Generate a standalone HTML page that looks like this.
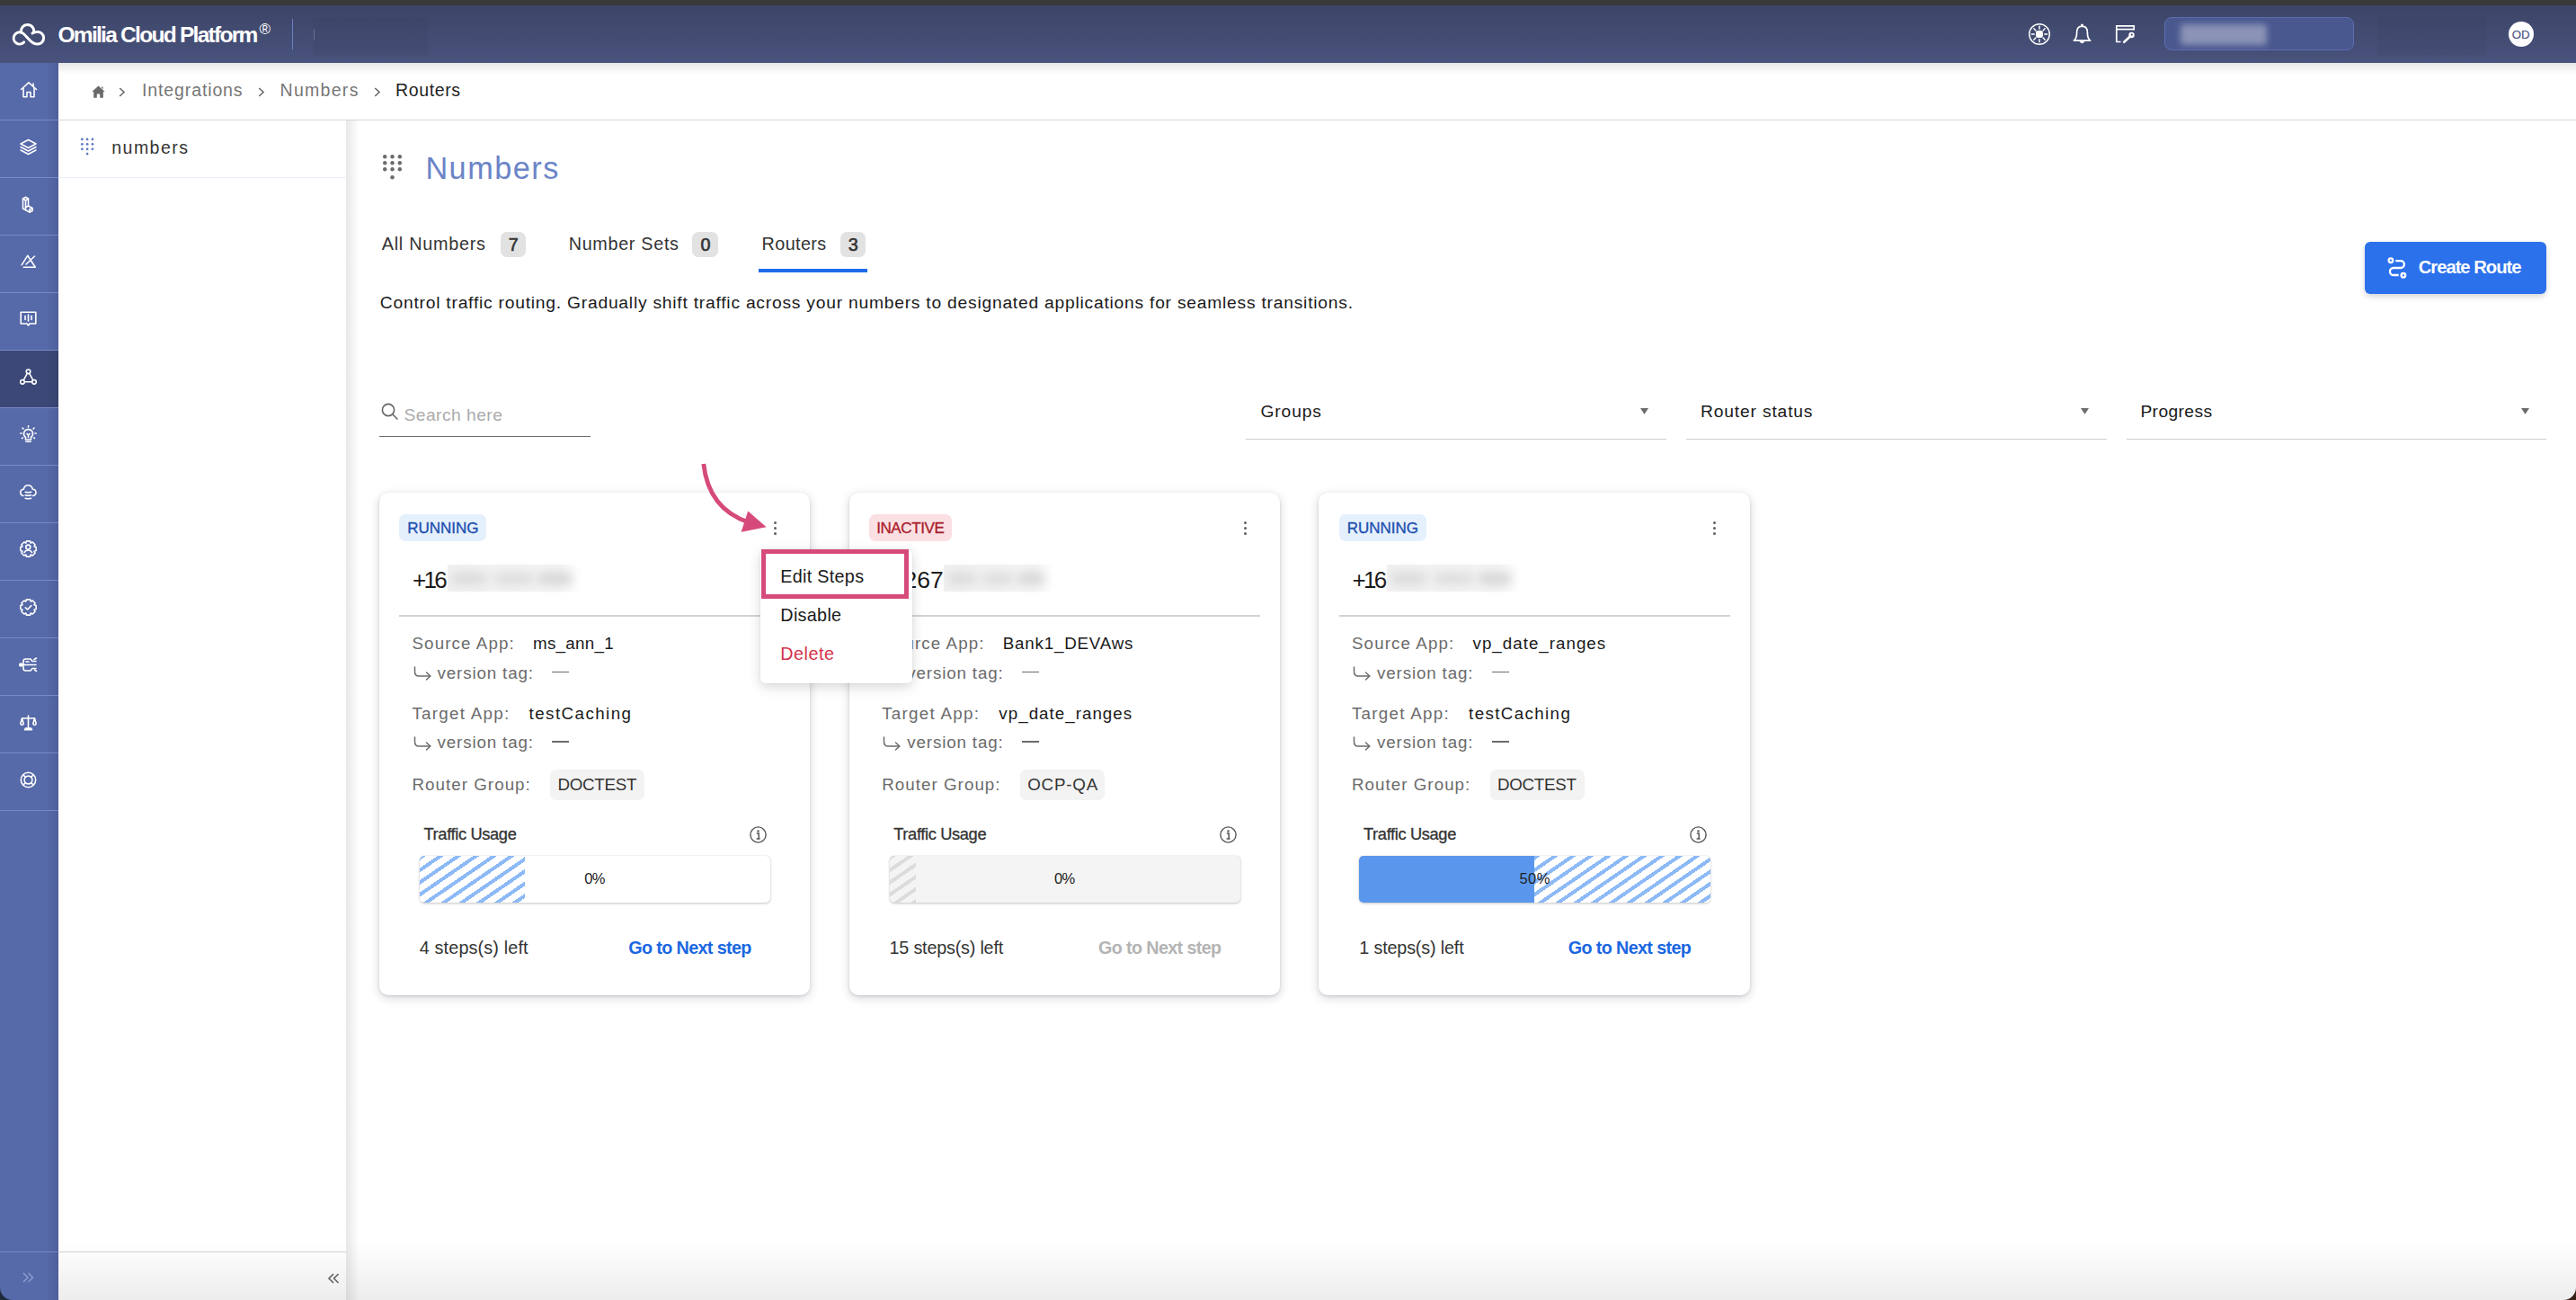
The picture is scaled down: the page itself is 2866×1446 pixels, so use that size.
<!DOCTYPE html><html><head><meta charset="utf-8"><title>Routers</title><style>
*{margin:0;padding:0;box-sizing:border-box}
html,body{width:2866px;height:1446px;overflow:hidden;background:#fff;font-family:'Liberation Sans',sans-serif}
.t{position:absolute;white-space:pre}
.r{position:absolute}
svg{position:absolute;overflow:visible}
</style></head><body>
<div class="r" style="left:0.00px;top:0.00px;width:2866.00px;height:6.00px;background:#3a3a3a"></div>
<div class="r" style="left:0.00px;top:6.00px;width:2866.00px;height:64.00px;background:linear-gradient(180deg,#3d4567 0%,#48527c 100%)"></div>
<div class="r" style="left:65.00px;top:70.00px;width:2801.00px;height:12.00px;background:linear-gradient(180deg,rgba(0,0,0,0.10),rgba(0,0,0,0))"></div>
<svg style="left:8px;top:18px" width="50" height="40" viewBox="0 0 50 40">
<g fill="none" stroke="#fff" stroke-width="3" stroke-linecap="round" stroke-linejoin="round">
<path d="M18.6 28.9 A6.6 6.6 0 1 1 16.3 18.3 C 21.5 20.5, 25.5 31, 33 31 A6.8 6.8 0 1 0 33 17.5 C 30.5 17.5, 29 18.5, 28 19"/>
<path d="M15.5 17.8 A7.2 7.2 0 1 1 29.7 17.8"/>
</g></svg>
<div class="t" style="left:64.50px;top:27.36px;font-size:24.5px;line-height:24.5px;font-weight:700;color:#ffffff;letter-spacing:-1.725px;">Omilia Cloud Platform</div>
<div class="t" style="left:288.50px;top:24.21px;font-size:17px;line-height:17px;font-weight:400;color:#ffffff;">®</div>
<div class="r" style="left:324.50px;top:21.00px;width:1.50px;height:34.00px;background:#6d80c4"></div>
<div class="r" style="left:348.00px;top:19.50px;width:128.00px;height:41.00px;background:rgba(40,45,75,0.08)"></div>
<div class="r" style="left:348.50px;top:32.00px;width:1.00px;height:11.50px;background:rgba(140,150,190,0.5)"></div>
<svg style="left:2257px;top:26px" width="24" height="24" viewBox="0 0 23.2 23.2">
<g fill="none" stroke="#fff" stroke-width="1.4" stroke-linecap="round"><circle cx="11.6" cy="11.6" r="10.9"/><line x1="17.20" y1="11.60" x2="20.00" y2="11.60"/><line x1="15.56" y1="15.56" x2="17.54" y2="17.54"/><line x1="11.60" y1="17.20" x2="11.60" y2="20.00"/><line x1="7.64" y1="15.56" x2="5.66" y2="17.54"/><line x1="6.00" y1="11.60" x2="3.20" y2="11.60"/><line x1="7.64" y1="7.64" x2="5.66" y2="5.66"/><line x1="11.60" y1="6.00" x2="11.60" y2="3.20"/><line x1="15.56" y1="7.64" x2="17.54" y2="5.66"/></g>
<rect x="7.8" y="7.8" width="7.6" height="7.6" rx="2.2" fill="#fff"/></svg>
<svg style="left:2306px;top:26px" width="21" height="24" viewBox="0 0 21 24">
<g fill="none" stroke="#fff" stroke-width="1.7" stroke-linejoin="round">
<path d="M10.5 3.2 C6.2 3.2 4.6 6.5 4.6 10.5 C4.6 15 3.9 17.2 1.4 19.2 L19.6 19.2 C17.1 17.2 16.4 15 16.4 10.5 C16.4 6.5 14.8 3.2 10.5 3.2 Z"/></g>
<circle cx="10.5" cy="2" r="1.6" fill="#fff"/><path d="M7.6 20 Q10.5 24.5 13.4 20 Z" fill="#fff"/></svg>
<svg style="left:2353px;top:27px" width="24" height="22" viewBox="0 0 24 22">
<g fill="none" stroke="#fff" stroke-width="1.7">
<path d="M6.5 19.5 L1.8 19.5 L1.8 1.8 L21.2 1.8 L21.2 6.5"/><path d="M1.8 5.6 L21.2 5.6"/></g>
<circle cx="18.5" cy="12" r="3.2" fill="#fff"/><circle cx="18.8" cy="11.6" r="1.1" fill="#465080"/>
<path d="M16.4 14 L10.2 19.8" stroke="#fff" stroke-width="2.6" stroke-linecap="round"/></svg>
<div class="r" style="left:2408.00px;top:19.00px;width:211.00px;height:37.00px;background:#4a5890;border:1px solid #5b6db2;border-radius:8px"></div>
<div class="r" style="left:2426.00px;top:27.00px;width:96.00px;height:23.00px;background:#8b94b6;filter:blur(3.5px);border-radius:4px"></div>
<div class="r" style="left:2645.00px;top:18.00px;width:121.00px;height:43.00px;background:rgba(40,45,75,0.08)"></div>
<div class="r" style="left:2791.00px;top:24.00px;width:28.00px;height:28.00px;background:#fff;border-radius:50%"></div>
<div class="t" style="left:2794.70px;top:31.68px;font-size:13.25px;line-height:13.25px;font-weight:400;color:#4a5482;-webkit-text-stroke:0.15px #4a5482;">OD</div>
<div class="r" style="left:0.00px;top:70.00px;width:65.00px;height:1376.00px;background:linear-gradient(90deg,#5669a8 0%,#5669a8 80%,#4e5f9c 100%)"></div>
<div class="r" style="left:0.00px;top:389.50px;width:65.00px;height:63.00px;background:linear-gradient(90deg,#3b4878 0%,#3b4878 80%,#36426f 100%)"></div>
<div class="r" style="left:0.00px;top:133.00px;width:65.00px;height:1.00px;background:rgba(150,165,220,0.55)"></div>
<div class="r" style="left:0.00px;top:197.00px;width:65.00px;height:1.00px;background:rgba(150,165,220,0.55)"></div>
<div class="r" style="left:0.00px;top:261.00px;width:65.00px;height:1.00px;background:rgba(150,165,220,0.55)"></div>
<div class="r" style="left:0.00px;top:325.00px;width:65.00px;height:1.00px;background:rgba(150,165,220,0.55)"></div>
<div class="r" style="left:0.00px;top:389.00px;width:65.00px;height:1.00px;background:rgba(150,165,220,0.55)"></div>
<div class="r" style="left:0.00px;top:453.00px;width:65.00px;height:1.00px;background:rgba(150,165,220,0.55)"></div>
<div class="r" style="left:0.00px;top:517.00px;width:65.00px;height:1.00px;background:rgba(150,165,220,0.55)"></div>
<div class="r" style="left:0.00px;top:581.00px;width:65.00px;height:1.00px;background:rgba(150,165,220,0.55)"></div>
<div class="r" style="left:0.00px;top:645.00px;width:65.00px;height:1.00px;background:rgba(150,165,220,0.55)"></div>
<div class="r" style="left:0.00px;top:709.00px;width:65.00px;height:1.00px;background:rgba(150,165,220,0.55)"></div>
<div class="r" style="left:0.00px;top:773.00px;width:65.00px;height:1.00px;background:rgba(150,165,220,0.55)"></div>
<div class="r" style="left:0.00px;top:837.00px;width:65.00px;height:1.00px;background:rgba(150,165,220,0.55)"></div>
<div class="r" style="left:0.00px;top:901.00px;width:65.00px;height:1.00px;background:rgba(150,165,220,0.55)"></div>
<div class="r" style="left:0.00px;top:1391.50px;width:65.00px;height:1.00px;background:rgba(150,165,220,0.55)"></div>
<svg style="left:0;top:1432px" width="14" height="14" viewBox="0 0 14 14"><path d="M0 0 A14 14 0 0 0 14 14 L0 14 Z" fill="#1e2a3a"/></svg>
<svg style="left:2852px;top:1432px" width="14" height="14" viewBox="0 0 14 14"><path d="M14 0 A14 14 0 0 1 0 14 L14 14 Z" fill="#3a2418"/></svg>
<svg style="left:25px;top:1415px" width="13" height="12" viewBox="0 0 13 12"><g fill="none" stroke="#8c9ad0" stroke-width="1.5"><path d="M1 1 L6 6 L1 11"/><path d="M6.5 1 L11.5 6 L6.5 11"/></g></svg>
<svg style="left:22px;top:90px" width="20" height="19" viewBox="0 0 20 19"><g fill="none" stroke="#fff" stroke-width="1.6" stroke-linecap="round" stroke-linejoin="round"><path d="M1.5 9.5 L10 1.8 L18.5 9.5"/><path d="M4 7.6 V17.8 H8 V12.5 H12 V17.8 H16 V7.6"/><path d="M15 3 V6"/></g></svg>
<svg style="left:22px;top:154px" width="19" height="19" viewBox="0 0 19 19"><g fill="none" stroke="#fff" stroke-width="1.6" stroke-linecap="round" stroke-linejoin="round"><path d="M9.5 1.5 L18 6 L9.5 10.5 L1 6 Z"/><path d="M1 9.5 L9.5 14 L18 9.5"/><path d="M1 13 L9.5 17.5 L18 13"/></g></svg>
<svg style="left:24px;top:218px" width="15" height="19" viewBox="0 0 15 19"><g fill="none" stroke="#fff" stroke-width="1.6" stroke-linecap="round" stroke-linejoin="round"><path d="M1.5 3 L4.5 1.2 L7.5 3 V11 L12 13.5 V16.5 L9 18 L1.5 14 Z"/><path d="M4.5 5 L7.5 3"/><path d="M1.5 3 L4.5 5 V15.5"/><path d="M7.5 11 L4.5 12.8"/><path d="M9 15 L12 13.5"/><path d="M9 15 V18"/></g></svg>
<svg style="left:23px;top:283px" width="18" height="16" viewBox="0 0 18 16"><g fill="none" stroke="#fff" stroke-width="1.6" stroke-linecap="round" stroke-linejoin="round"><path d="M1.2 11.7 L7.7 1.3 L16.3 14.2 H3.3"/><path d="M6 11 L15.5 2"/></g></svg>
<svg style="left:22px;top:346px" width="19" height="18" viewBox="0 0 19 18"><g fill="none" stroke="#fff" stroke-width="1.6" stroke-linecap="round" stroke-linejoin="round"><path d="M1.2 1.2 H17.8 V14 H11 L9.5 16 L8 14 H1.2 Z"/><path d="M6 5.5 V9.5"/><path d="M9.5 4 V11"/><path d="M13 5.5 V9.5"/></g></svg>
<svg style="left:22px;top:410px" width="19" height="19" viewBox="0 0 19 19"><g fill="none" stroke="#fff" stroke-width="1.6" stroke-linecap="round" stroke-linejoin="round"><circle cx="9.5" cy="3.3" r="2.3"/><circle cx="3" cy="14.8" r="2.3"/><circle cx="16" cy="14.8" r="2.3"/><path d="M8.3 5.3 L4.2 12.8"/><path d="M10.7 5.3 L14.8 12.8"/><path d="M5.3 14.8 H13.7"/></g></svg>
<svg style="left:22px;top:473px" width="19" height="19" viewBox="0 0 19 19"><g fill="none" stroke="#fff" stroke-width="1.6" stroke-linecap="round" stroke-linejoin="round"><path d="M6.5 13.5 C4.5 12 4.3 10 4.6 8.5 C5.2 6 7.2 4.6 9.5 4.6 C11.8 4.6 13.8 6 14.4 8.5 C14.7 10 14.5 12 12.5 13.5 V16 H6.5 Z"/><path d="M6.8 18.2 H12.2"/><path d="M8 9.5 L9.5 11 L11 9.5 M9.5 11 V13.5"/><path d="M9.5 0.8 V2"/><path d="M3 3 L3.9 3.9"/><path d="M16 3 L15.1 3.9"/><path d="M0.8 9 H2"/><path d="M17 9 H18.2"/><path d="M2.5 14.5 L3.3 13.9"/><path d="M16.5 14.5 L15.7 13.9"/></g></svg>
<svg style="left:22px;top:539px" width="19" height="18" viewBox="0 0 19 18"><g fill="none" stroke="#fff" stroke-width="1.6" stroke-linecap="round" stroke-linejoin="round"><path d="M4 12.5 C1.8 12.2 0.8 10.6 0.8 8.8 C0.8 6.8 2.3 5.4 4.2 5.3 C4.8 2.6 6.8 0.8 9.3 0.8 C11.8 0.8 13.8 2.6 14.4 5.3 C16.4 5.4 18 6.8 18 8.8 C18 10.6 16.9 12.2 14.6 12.5"/><path d="M6.2 8.3 Q9.4 9.3 12.6 8.3"/><path d="M6.2 11.8 Q9.4 12.8 12.6 11.8"/><path d="M6.2 15.2 Q9.4 16.2 12.6 15.2"/></g></svg>
<svg style="left:22px;top:601px" width="19" height="19" viewBox="0 0 19 19"><g fill="none" stroke="#fff" stroke-width="1.6" stroke-linecap="round" stroke-linejoin="round"><path d="M7.50 0.83 L11.50 0.83 L12.18 3.03 L14.22 1.95 L17.05 4.78 L15.97 6.82 L18.17 7.50 L18.17 11.50 L15.97 12.18 L17.05 14.22 L14.22 17.05 L12.18 15.97 L11.50 18.17 L7.50 18.17 L6.82 15.97 L4.78 17.05 L1.95 14.22 L3.03 12.18 L0.83 11.50 L0.83 7.50 L3.03 6.82 L1.95 4.78 L4.78 1.95 L6.82 3.03 Z"/><circle cx="9.3" cy="7.6" r="2.5"/><path d="M5 13.6 C6 11.8 7.5 11 9.3 11 C11.1 11 12.6 11.8 13.6 13.6"/></g></svg>
<svg style="left:22px;top:666px" width="19" height="19" viewBox="0 0 19 19"><g fill="none" stroke="#fff" stroke-width="1.6" stroke-linecap="round" stroke-linejoin="round"><path d="M7.50 0.83 L11.50 0.83 L12.18 3.03 L14.22 1.95 L17.05 4.78 L15.97 6.82 L18.17 7.50 L18.17 11.50 L15.97 12.18 L17.05 14.22 L14.22 17.05 L12.18 15.97 L11.50 18.17 L7.50 18.17 L6.82 15.97 L4.78 17.05 L1.95 14.22 L3.03 12.18 L0.83 11.50 L0.83 7.50 L3.03 6.82 L1.95 4.78 L4.78 1.95 L6.82 3.03 Z"/><path d="M6.3 9.8 L8.6 12 L12.8 7.6"/></g></svg>
<svg style="left:21px;top:731px" width="21" height="17" viewBox="0 0 21 17"><g fill="none" stroke="#fff" stroke-width="1.6" stroke-linecap="round" stroke-linejoin="round"><circle cx="2.2" cy="8.5" r="1.4" fill="#fff"/><path d="M3.5 8.5 H19"/><path d="M5 8.5 V4.5 C5 3 6 2 7.5 2 H13 L15 4.5 H19"/><path d="M5 8.5 V12.5 C5 14 6 15 7.5 15 H13 L15 12.5 H19"/><path d="M8 5 H11"/><path d="M17 2.5 L19.5 1"/><path d="M17.5 14 L19.5 15.5"/></g></svg>
<svg style="left:22px;top:795px" width="19" height="18" viewBox="0 0 19 18"><g fill="none" stroke="#fff" stroke-width="1.6" stroke-linecap="round" stroke-linejoin="round"><path d="M9.5 1 V15"/><path d="M2.5 4 H16.5"/><path d="M2.5 4 L0.8 10 C1.5 12 3.5 12 4.2 10 Z"/><path d="M16.5 4 L14.8 10 C15.5 12 17.5 12 18.2 10 Z"/><path d="M5.5 16.8 H13.5 L12.5 15 H6.5 Z" fill="#fff"/></g></svg>
<svg style="left:22px;top:858px" width="19" height="19" viewBox="0 0 19 19"><g fill="none" stroke="#fff" stroke-width="1.6" stroke-linecap="round" stroke-linejoin="round"><circle cx="9.5" cy="9.5" r="8.2"/><circle cx="9.5" cy="9.5" r="4.4"/><path d="M3.7 3.7 L6.4 6.4"/><path d="M15.3 3.7 L12.6 6.4"/><path d="M3.7 15.3 L6.4 12.6"/><path d="M15.3 15.3 L12.6 12.6"/></g></svg>
<div class="r" style="left:65.00px;top:133.00px;width:2801.00px;height:1.00px;background:#d6d6d6"></div>
<svg style="left:101.5px;top:95px" width="15" height="14" viewBox="0 0 15 14"><path d="M7.5 0.5 L0.3 7 L2.2 7 L2.2 13.8 L5.8 13.8 L5.8 9.6 L9.2 9.6 L9.2 13.8 L12.8 13.8 L12.8 7 L14.7 7 Z M11 1.5 L12.5 1.5 L12.5 4.2 L11 2.8 Z" fill="#6a6a6a"/></svg>
<svg style="left:132px;top:97px" width="8" height="11" viewBox="0 0 8 11"><path d="M1.2 1 L6 5.5 L1.2 10" fill="none" stroke="#6a6a6a" stroke-width="1.6"/></svg>
<svg style="left:286.5px;top:97px" width="8" height="11" viewBox="0 0 8 11"><path d="M1.2 1 L6 5.5 L1.2 10" fill="none" stroke="#6a6a6a" stroke-width="1.6"/></svg>
<svg style="left:415.5px;top:97px" width="8" height="11" viewBox="0 0 8 11"><path d="M1.2 1 L6 5.5 L1.2 10" fill="none" stroke="#6a6a6a" stroke-width="1.6"/></svg>
<div class="t" style="left:158.00px;top:91.09px;font-size:19.5px;line-height:19.5px;font-weight:400;color:#767676;letter-spacing:0.882px;">Integrations</div>
<div class="t" style="left:311.50px;top:91.09px;font-size:19.5px;line-height:19.5px;font-weight:400;color:#767676;letter-spacing:1.300px;">Numbers</div>
<div class="t" style="left:440.10px;top:91.09px;font-size:19.5px;line-height:19.5px;font-weight:400;color:#1f1f1f;letter-spacing:0.600px;">Routers</div>
<div class="r" style="left:65.00px;top:1391.50px;width:320.00px;height:1.00px;background:#d4d4d4"></div>
<div class="r" style="left:65.00px;top:197.00px;width:320.00px;height:1.00px;background:#e9eef8"></div>
<svg style="left:89px;top:153px" width="18" height="21" viewBox="0 0 18 21"><g fill="#5b76c6"><circle cx="2.30" cy="1.90" r="1.35"/><circle cx="8.10" cy="1.90" r="1.35"/><circle cx="13.90" cy="1.90" r="1.35"/><circle cx="2.30" cy="7.35" r="1.35"/><circle cx="8.10" cy="7.35" r="1.35"/><circle cx="13.90" cy="7.35" r="1.35"/><circle cx="2.30" cy="12.80" r="1.35"/><circle cx="8.10" cy="12.80" r="1.35"/><circle cx="13.90" cy="12.80" r="1.35"/><circle cx="8.1" cy="18.1" r="1.35"/></g></svg>
<div class="t" style="left:124.20px;top:155.49px;font-size:19.5px;line-height:19.5px;font-weight:400;color:#333333;letter-spacing:1.500px;">numbers</div>
<svg style="left:365px;top:1416px" width="13" height="12" viewBox="0 0 13 12"><g fill="none" stroke="#666" stroke-width="1.6"><path d="M6 1 L1 6 L6 11"/><path d="M11.5 1 L6.5 6 L11.5 11"/></g></svg>
<div class="r" style="left:385.00px;top:134.00px;width:15.00px;height:1312.00px;background:linear-gradient(90deg,rgba(0,0,0,0.09),rgba(0,0,0,0))"></div>
<div class="r" style="left:65.00px;top:1380.00px;width:2801.00px;height:66.00px;background:linear-gradient(180deg,rgba(0,0,0,0),rgba(0,0,0,0.07))"></div>
<svg style="left:425.5px;top:171.5px" width="22" height="28" viewBox="0 0 22 28"><g fill="#6b6b6b"><circle cx="2.20" cy="2.20" r="2.2"/><circle cx="10.50" cy="2.20" r="2.2"/><circle cx="18.80" cy="2.20" r="2.2"/><circle cx="2.20" cy="9.20" r="2.2"/><circle cx="10.50" cy="9.20" r="2.2"/><circle cx="18.80" cy="9.20" r="2.2"/><circle cx="2.20" cy="16.20" r="2.2"/><circle cx="10.50" cy="16.20" r="2.2"/><circle cx="18.80" cy="16.20" r="2.2"/><circle cx="10.5" cy="25.2" r="2.2"/></g></svg>
<div class="t" style="left:473.40px;top:170.21px;font-size:34.25px;line-height:34.25px;font-weight:400;color:#6b84c7;letter-spacing:1.500px;">Numbers</div>
<div class="t" style="left:424.70px;top:261.88px;font-size:19.75px;line-height:19.75px;font-weight:400;color:#333333;letter-spacing:0.770px;">All Numbers</div>
<div class="t" style="left:632.70px;top:261.88px;font-size:19.75px;line-height:19.75px;font-weight:400;color:#333333;letter-spacing:0.700px;">Number Sets</div>
<div class="t" style="left:847.60px;top:261.88px;font-size:19.75px;line-height:19.75px;font-weight:400;color:#333333;letter-spacing:0.400px;">Routers</div>
<div class="r" style="left:557.00px;top:258.00px;width:27.50px;height:28.00px;background:#e2e2e2;border-radius:7px"></div>
<div class="t" style="left:565.75px;top:262.88px;font-size:19.75px;line-height:19.75px;font-weight:400;color:#333333;-webkit-text-stroke:0.6px #333;">7</div>
<div class="r" style="left:770.00px;top:258.00px;width:29.00px;height:28.00px;background:#e2e2e2;border-radius:7px"></div>
<div class="t" style="left:779.50px;top:262.88px;font-size:19.75px;line-height:19.75px;font-weight:400;color:#333333;-webkit-text-stroke:0.6px #333;">0</div>
<div class="r" style="left:935.00px;top:258.00px;width:27.50px;height:28.00px;background:#e2e2e2;border-radius:7px"></div>
<div class="t" style="left:943.75px;top:262.88px;font-size:19.75px;line-height:19.75px;font-weight:400;color:#333333;-webkit-text-stroke:0.6px #333;">3</div>
<div class="r" style="left:844.00px;top:299.20px;width:121.00px;height:3.40px;background:#1f6be9"></div>
<div class="t" style="left:422.80px;top:327.10px;font-size:19.25px;line-height:19.25px;font-weight:400;color:#1a1a1a;letter-spacing:0.768px;">Control traffic routing. Gradually shift traffic across your numbers to designated applications for seamless transitions.</div>
<div class="r" style="left:2631.00px;top:269.00px;width:202.00px;height:58.00px;background:#2c71ec;border-radius:6px;box-shadow:0 3px 6px rgba(0,0,0,0.16)"></div>
<svg style="left:2655px;top:285px" width="24" height="26" viewBox="0 0 24 26"><g fill="none" stroke="#fff" stroke-width="2.3" stroke-linecap="butt">
<circle cx="4.9" cy="4.7" r="2.3"/><circle cx="18.9" cy="21.3" r="2.3"/>
<path d="M10.3 5.2 H16 A3.9 3.9 0 0 1 16 13 H7.95 A4 4 0 0 0 7.95 21 H13.7"/></g></svg>
<div class="t" style="left:2690.70px;top:287.46px;font-size:20.25px;line-height:20.25px;font-weight:700;color:#ffffff;letter-spacing:-1.018px;">Create Route</div>
<svg style="left:424px;top:448px" width="20" height="20" viewBox="0 0 20 20"><g fill="none" stroke="#666" stroke-width="1.6"><circle cx="8" cy="8" r="6.6"/><path d="M12.8 12.8 L18.3 18.5"/></g></svg>
<div class="t" style="left:449.50px;top:452.00px;font-size:19.25px;line-height:19.25px;font-weight:400;color:#ababab;letter-spacing:0.450px;">Search here</div>
<div class="r" style="left:422.00px;top:484.80px;width:235.00px;height:1.40px;background:#6e6e6e"></div>
<div class="t" style="left:1402.50px;top:448.10px;font-size:19.25px;line-height:19.25px;font-weight:400;color:#1a1a1a;letter-spacing:0.860px;">Groups</div>
<div class="r" style="left:1386.00px;top:487.80px;width:467.50px;height:1.20px;background:#cfcfcf"></div>
<svg style="left:1825.3px;top:454px" width="9" height="7" viewBox="0 0 9 7"><path d="M0 0 H9 L4.5 6.8 Z" fill="#6b6b6b"/></svg>
<div class="t" style="left:1892.00px;top:448.10px;font-size:19.25px;line-height:19.25px;font-weight:400;color:#1a1a1a;letter-spacing:0.833px;">Router status</div>
<div class="r" style="left:1876.00px;top:487.80px;width:467.50px;height:1.20px;background:#cfcfcf"></div>
<svg style="left:2315.3px;top:454px" width="9" height="7" viewBox="0 0 9 7"><path d="M0 0 H9 L4.5 6.8 Z" fill="#6b6b6b"/></svg>
<div class="t" style="left:2381.40px;top:448.10px;font-size:19.25px;line-height:19.25px;font-weight:400;color:#1a1a1a;letter-spacing:0.371px;">Progress</div>
<div class="r" style="left:2365.50px;top:487.80px;width:467.50px;height:1.20px;background:#cfcfcf"></div>
<svg style="left:2804.8px;top:454px" width="9" height="7" viewBox="0 0 9 7"><path d="M0 0 H9 L4.5 6.8 Z" fill="#6b6b6b"/></svg>
<div class="r" style="left:421.90px;top:547.60px;width:479.60px;height:559.00px;background:#fff;border-radius:10px;box-shadow:0 1px 3px rgba(30,35,60,0.14),0 3px 11px rgba(30,35,60,0.19)"></div>
<div class="r" style="left:444.00px;top:572.00px;width:97.00px;height:29.80px;background:#e5f0fd;border-radius:7px"></div>
<div class="t" style="left:453.20px;top:578.51px;font-size:17.0px;line-height:17.0px;font-weight:400;color:#1d4fae;-webkit-text-stroke:0.35px #1d4fae;">RUNNING</div>
<div class="r" style="left:860.80px;top:579.90px;width:3.00px;height:3.00px;background:#606060;border-radius:50%"></div>
<div class="r" style="left:860.80px;top:585.80px;width:3.00px;height:3.00px;background:#606060;border-radius:50%"></div>
<div class="r" style="left:860.80px;top:591.70px;width:3.00px;height:3.00px;background:#606060;border-radius:50%"></div>
<div class="t" style="left:459.10px;top:632.39px;font-size:26px;line-height:26px;font-weight:400;color:#1a1a1a;letter-spacing:-2.800px;">+16</div>
<div class="r" style="left:497.50px;top:628.00px;width:148.00px;height:30.00px;background:linear-gradient(90deg,#f1f1f1,#f5f5f5 85%,rgba(255,255,255,0))"></div>
<div class="r" style="left:501.50px;top:637.00px;width:40.40px;height:13.00px;background:#d9d9d9;filter:blur(6px);border-radius:7px"></div>
<div class="r" style="left:549.30px;top:637.00px;width:44.40px;height:13.00px;background:#dcdcdc;filter:blur(6px);border-radius:7px"></div>
<div class="r" style="left:598.14px;top:637.00px;width:38.48px;height:13.00px;background:#d4d4d4;filter:blur(6px);border-radius:7px"></div>
<div class="r" style="left:444.00px;top:683.60px;width:435.00px;height:2.20px;background:#d3d3d3"></div>
<div class="t" style="left:458.50px;top:706.53px;font-size:18.75px;line-height:18.75px;font-weight:400;color:#6b6b6b;letter-spacing:1.100px;">Source App:</div>
<div class="t" style="left:593.00px;top:706.53px;font-size:18.75px;line-height:18.75px;font-weight:400;color:#1a1a1a;letter-spacing:0.286px;">ms_ann_1</div>
<svg style="left:459.5px;top:741.0px" width="21" height="16" viewBox="0 0 21 16"><g fill="none" stroke="#6b6b6b" stroke-width="1.5" stroke-linecap="round" stroke-linejoin="round"><path d="M1.5 1 V6 C1.5 9 3 11 6 11 H18.5"/><path d="M14.5 7 L18.8 11 L14.5 15"/></g></svg>
<div class="t" style="left:486.50px;top:739.73px;font-size:18.75px;line-height:18.75px;font-weight:400;color:#6b6b6b;letter-spacing:0.864px;">version tag:</div>
<div class="r" style="left:614.00px;top:746.80px;width:19.30px;height:1.40px;background:#6b6b6b"></div>
<svg style="left:459.5px;top:818.5px" width="21" height="16" viewBox="0 0 21 16"><g fill="none" stroke="#6b6b6b" stroke-width="1.5" stroke-linecap="round" stroke-linejoin="round"><path d="M1.5 1 V6 C1.5 9 3 11 6 11 H18.5"/><path d="M14.5 7 L18.8 11 L14.5 15"/></g></svg>
<div class="t" style="left:486.50px;top:817.23px;font-size:18.75px;line-height:18.75px;font-weight:400;color:#6b6b6b;letter-spacing:0.864px;">version tag:</div>
<div class="r" style="left:614.00px;top:824.30px;width:19.30px;height:1.40px;background:#6b6b6b"></div>
<div class="t" style="left:458.40px;top:784.83px;font-size:18.75px;line-height:18.75px;font-weight:400;color:#6b6b6b;letter-spacing:1.300px;">Target App:</div>
<div class="t" style="left:588.60px;top:784.83px;font-size:18.75px;line-height:18.75px;font-weight:400;color:#1a1a1a;letter-spacing:1.440px;">testCaching</div>
<div class="t" style="left:458.40px;top:863.73px;font-size:18.75px;line-height:18.75px;font-weight:400;color:#6b6b6b;letter-spacing:1.050px;">Router Group:</div>
<div class="r" style="left:612.00px;top:856.30px;width:105.30px;height:33.30px;background:#f3f3f3;border-radius:7px"></div>
<div class="t" style="left:620.40px;top:863.73px;font-size:18.75px;line-height:18.75px;font-weight:400;color:#333333;letter-spacing:-0.233px;">DOCTEST</div>
<div class="t" style="left:471.50px;top:918.75px;font-size:18.25px;line-height:18.25px;font-weight:400;color:#333333;letter-spacing:-0.350px;-webkit-text-stroke:0.3px #333;">Traffic Usage</div>
<svg style="left:834.0px;top:918.7px" width="19" height="19" viewBox="0 0 19 19"><circle cx="9.5" cy="9.5" r="8.6" fill="none" stroke="#555" stroke-width="1.4"/><circle cx="9.5" cy="5.4" r="1.2" fill="#555"/><path d="M7.8 8 H10.2 V13.8 M7.6 14 H11.6" fill="none" stroke="#555" stroke-width="1.5"/></svg>
<div class="r" style="left:466.80px;top:951.6px;width:390.30px;height:52.0px;background:#fff;border-radius:5px;overflow:hidden;box-shadow:0 1px 3px rgba(0,0,0,0.22),0 0 1px rgba(0,0,0,0.2)"><div class="r" style="left:0;top:0;width:117px;height:100%;background-color:#fff;background-image:repeating-linear-gradient(145.5deg,#8dbaf6 0px,#8dbaf6 4px,rgba(0,0,0,0) 4px,rgba(0,0,0,0) 11.2px)"></div></div>
<div class="t" style="left:650.30px;top:968.93px;font-size:16.5px;line-height:16.5px;font-weight:400;color:#222222;letter-spacing:-0.700px;">0%</div>
<div class="t" style="left:466.80px;top:1045.08px;font-size:19.75px;line-height:19.75px;font-weight:400;color:#333333;letter-spacing:0.157px;">4 steps(s) left</div>
<div class="t" style="left:699.30px;top:1044.88px;font-size:19.75px;line-height:19.75px;font-weight:700;color:#1b67e2;letter-spacing:-0.636px;">Go to Next step</div>
<div class="r" style="left:944.65px;top:547.60px;width:479.60px;height:559.00px;background:#fff;border-radius:10px;box-shadow:0 1px 3px rgba(30,35,60,0.14),0 3px 11px rgba(30,35,60,0.19)"></div>
<div class="r" style="left:966.75px;top:572.00px;width:92.50px;height:29.80px;background:#fbe0e3;border-radius:7px"></div>
<div class="t" style="left:975.15px;top:578.51px;font-size:17.0px;line-height:17.0px;font-weight:400;color:#a91d2c;letter-spacing:-0.386px;-webkit-text-stroke:0.35px #a91d2c;">INACTIVE</div>
<div class="r" style="left:1383.55px;top:579.90px;width:3.00px;height:3.00px;background:#606060;border-radius:50%"></div>
<div class="r" style="left:1383.55px;top:585.80px;width:3.00px;height:3.00px;background:#606060;border-radius:50%"></div>
<div class="r" style="left:1383.55px;top:591.70px;width:3.00px;height:3.00px;background:#606060;border-radius:50%"></div>
<div class="t" style="left:1005.60px;top:631.97px;font-size:26.5px;line-height:26.5px;font-weight:400;color:#1a1a1a;">267</div>
<div class="r" style="left:1049.60px;top:628.00px;width:121.00px;height:30.00px;background:linear-gradient(90deg,#f1f1f1,#f5f5f5 85%,rgba(255,255,255,0))"></div>
<div class="r" style="left:1053.60px;top:637.00px;width:32.30px;height:13.00px;background:#d9d9d9;filter:blur(6px);border-radius:7px"></div>
<div class="r" style="left:1091.95px;top:637.00px;width:36.30px;height:13.00px;background:#dcdcdc;filter:blur(6px);border-radius:7px"></div>
<div class="r" style="left:1131.88px;top:637.00px;width:31.46px;height:13.00px;background:#d4d4d4;filter:blur(6px);border-radius:7px"></div>
<div class="r" style="left:966.75px;top:683.60px;width:435.00px;height:2.20px;background:#d3d3d3"></div>
<div class="t" style="left:981.25px;top:706.53px;font-size:18.75px;line-height:18.75px;font-weight:400;color:#6b6b6b;letter-spacing:1.100px;">Source App:</div>
<div class="t" style="left:1115.75px;top:706.53px;font-size:18.75px;line-height:18.75px;font-weight:400;color:#1a1a1a;letter-spacing:0.800px;">Bank1_DEVAws</div>
<svg style="left:982.2px;top:741.0px" width="21" height="16" viewBox="0 0 21 16"><g fill="none" stroke="#6b6b6b" stroke-width="1.5" stroke-linecap="round" stroke-linejoin="round"><path d="M1.5 1 V6 C1.5 9 3 11 6 11 H18.5"/><path d="M14.5 7 L18.8 11 L14.5 15"/></g></svg>
<div class="t" style="left:1009.25px;top:739.73px;font-size:18.75px;line-height:18.75px;font-weight:400;color:#6b6b6b;letter-spacing:0.864px;">version tag:</div>
<div class="r" style="left:1136.75px;top:746.80px;width:19.30px;height:1.40px;background:#6b6b6b"></div>
<svg style="left:982.2px;top:818.5px" width="21" height="16" viewBox="0 0 21 16"><g fill="none" stroke="#6b6b6b" stroke-width="1.5" stroke-linecap="round" stroke-linejoin="round"><path d="M1.5 1 V6 C1.5 9 3 11 6 11 H18.5"/><path d="M14.5 7 L18.8 11 L14.5 15"/></g></svg>
<div class="t" style="left:1009.25px;top:817.23px;font-size:18.75px;line-height:18.75px;font-weight:400;color:#6b6b6b;letter-spacing:0.864px;">version tag:</div>
<div class="r" style="left:1136.75px;top:824.30px;width:19.30px;height:1.40px;background:#6b6b6b"></div>
<div class="t" style="left:981.15px;top:784.83px;font-size:18.75px;line-height:18.75px;font-weight:400;color:#6b6b6b;letter-spacing:1.300px;">Target App:</div>
<div class="t" style="left:1111.35px;top:784.83px;font-size:18.75px;line-height:18.75px;font-weight:400;color:#1a1a1a;letter-spacing:1.023px;">vp_date_ranges</div>
<div class="t" style="left:981.15px;top:863.73px;font-size:18.75px;line-height:18.75px;font-weight:400;color:#6b6b6b;letter-spacing:1.050px;">Router Group:</div>
<div class="r" style="left:1134.75px;top:856.30px;width:94.10px;height:33.30px;background:#f3f3f3;border-radius:7px"></div>
<div class="t" style="left:1143.15px;top:863.73px;font-size:18.75px;line-height:18.75px;font-weight:400;color:#333333;letter-spacing:0.820px;">OCP-QA</div>
<div class="t" style="left:994.25px;top:918.75px;font-size:18.25px;line-height:18.25px;font-weight:400;color:#333333;letter-spacing:-0.350px;-webkit-text-stroke:0.3px #333;">Traffic Usage</div>
<svg style="left:1356.8px;top:918.7px" width="19" height="19" viewBox="0 0 19 19"><circle cx="9.5" cy="9.5" r="8.6" fill="none" stroke="#555" stroke-width="1.4"/><circle cx="9.5" cy="5.4" r="1.2" fill="#555"/><path d="M7.8 8 H10.2 V13.8 M7.6 14 H11.6" fill="none" stroke="#555" stroke-width="1.5"/></svg>
<div class="r" style="left:989.55px;top:951.6px;width:390.30px;height:52.0px;background:#f4f4f4;border-radius:5px;overflow:hidden;box-shadow:0 1px 3px rgba(0,0,0,0.22),0 0 1px rgba(0,0,0,0.2)"><div class="r" style="left:0;top:0;width:29px;height:100%;background-color:#f4f4f4;background-image:repeating-linear-gradient(145.5deg,#dcdcdc 0px,#dcdcdc 4px,rgba(0,0,0,0) 4px,rgba(0,0,0,0) 11.2px)"></div></div>
<div class="t" style="left:1173.05px;top:968.93px;font-size:16.5px;line-height:16.5px;font-weight:400;color:#222222;letter-spacing:-0.700px;">0%</div>
<div class="t" style="left:989.55px;top:1045.08px;font-size:19.75px;line-height:19.75px;font-weight:400;color:#333333;letter-spacing:-0.193px;">15 steps(s) left</div>
<div class="t" style="left:1222.05px;top:1044.88px;font-size:19.75px;line-height:19.75px;font-weight:700;color:#b4b4b4;letter-spacing:-0.636px;">Go to Next step</div>
<div class="r" style="left:1467.40px;top:547.60px;width:479.60px;height:559.00px;background:#fff;border-radius:10px;box-shadow:0 1px 3px rgba(30,35,60,0.14),0 3px 11px rgba(30,35,60,0.19)"></div>
<div class="r" style="left:1489.50px;top:572.00px;width:97.00px;height:29.80px;background:#e5f0fd;border-radius:7px"></div>
<div class="t" style="left:1498.70px;top:578.51px;font-size:17.0px;line-height:17.0px;font-weight:400;color:#1d4fae;-webkit-text-stroke:0.35px #1d4fae;">RUNNING</div>
<div class="r" style="left:1906.30px;top:579.90px;width:3.00px;height:3.00px;background:#606060;border-radius:50%"></div>
<div class="r" style="left:1906.30px;top:585.80px;width:3.00px;height:3.00px;background:#606060;border-radius:50%"></div>
<div class="r" style="left:1906.30px;top:591.70px;width:3.00px;height:3.00px;background:#606060;border-radius:50%"></div>
<div class="t" style="left:1504.60px;top:632.39px;font-size:26px;line-height:26px;font-weight:400;color:#1a1a1a;letter-spacing:-2.800px;">+16</div>
<div class="r" style="left:1543.00px;top:628.00px;width:148.00px;height:30.00px;background:linear-gradient(90deg,#f1f1f1,#f5f5f5 85%,rgba(255,255,255,0))"></div>
<div class="r" style="left:1547.00px;top:637.00px;width:40.40px;height:13.00px;background:#d9d9d9;filter:blur(6px);border-radius:7px"></div>
<div class="r" style="left:1594.80px;top:637.00px;width:44.40px;height:13.00px;background:#dcdcdc;filter:blur(6px);border-radius:7px"></div>
<div class="r" style="left:1643.64px;top:637.00px;width:38.48px;height:13.00px;background:#d4d4d4;filter:blur(6px);border-radius:7px"></div>
<div class="r" style="left:1489.50px;top:683.60px;width:435.00px;height:2.20px;background:#d3d3d3"></div>
<div class="t" style="left:1504.00px;top:706.53px;font-size:18.75px;line-height:18.75px;font-weight:400;color:#6b6b6b;letter-spacing:1.100px;">Source App:</div>
<div class="t" style="left:1638.50px;top:706.53px;font-size:18.75px;line-height:18.75px;font-weight:400;color:#1a1a1a;letter-spacing:1.015px;">vp_date_ranges</div>
<svg style="left:1505.0px;top:741.0px" width="21" height="16" viewBox="0 0 21 16"><g fill="none" stroke="#6b6b6b" stroke-width="1.5" stroke-linecap="round" stroke-linejoin="round"><path d="M1.5 1 V6 C1.5 9 3 11 6 11 H18.5"/><path d="M14.5 7 L18.8 11 L14.5 15"/></g></svg>
<div class="t" style="left:1532.00px;top:739.73px;font-size:18.75px;line-height:18.75px;font-weight:400;color:#6b6b6b;letter-spacing:0.864px;">version tag:</div>
<div class="r" style="left:1659.50px;top:746.80px;width:19.30px;height:1.40px;background:#6b6b6b"></div>
<svg style="left:1505.0px;top:818.5px" width="21" height="16" viewBox="0 0 21 16"><g fill="none" stroke="#6b6b6b" stroke-width="1.5" stroke-linecap="round" stroke-linejoin="round"><path d="M1.5 1 V6 C1.5 9 3 11 6 11 H18.5"/><path d="M14.5 7 L18.8 11 L14.5 15"/></g></svg>
<div class="t" style="left:1532.00px;top:817.23px;font-size:18.75px;line-height:18.75px;font-weight:400;color:#6b6b6b;letter-spacing:0.864px;">version tag:</div>
<div class="r" style="left:1659.50px;top:824.30px;width:19.30px;height:1.40px;background:#6b6b6b"></div>
<div class="t" style="left:1503.90px;top:784.83px;font-size:18.75px;line-height:18.75px;font-weight:400;color:#6b6b6b;letter-spacing:1.300px;">Target App:</div>
<div class="t" style="left:1634.10px;top:784.83px;font-size:18.75px;line-height:18.75px;font-weight:400;color:#1a1a1a;letter-spacing:1.370px;">testCaching</div>
<div class="t" style="left:1503.90px;top:863.73px;font-size:18.75px;line-height:18.75px;font-weight:400;color:#6b6b6b;letter-spacing:1.050px;">Router Group:</div>
<div class="r" style="left:1657.50px;top:856.30px;width:105.80px;height:33.30px;background:#f3f3f3;border-radius:7px"></div>
<div class="t" style="left:1665.90px;top:863.73px;font-size:18.75px;line-height:18.75px;font-weight:400;color:#333333;letter-spacing:-0.250px;">DOCTEST</div>
<div class="t" style="left:1517.00px;top:918.75px;font-size:18.25px;line-height:18.25px;font-weight:400;color:#333333;letter-spacing:-0.350px;-webkit-text-stroke:0.3px #333;">Traffic Usage</div>
<svg style="left:1879.5px;top:918.7px" width="19" height="19" viewBox="0 0 19 19"><circle cx="9.5" cy="9.5" r="8.6" fill="none" stroke="#555" stroke-width="1.4"/><circle cx="9.5" cy="5.4" r="1.2" fill="#555"/><path d="M7.8 8 H10.2 V13.8 M7.6 14 H11.6" fill="none" stroke="#555" stroke-width="1.5"/></svg>
<div class="r" style="left:1512.30px;top:951.6px;width:390.30px;height:52.0px;background:#fff;border-radius:5px;overflow:hidden;box-shadow:0 1px 3px rgba(0,0,0,0.22),0 0 1px rgba(0,0,0,0.2)"><div class="r" style="left:0;top:0;width:195px;height:100%;background:#5a97ec"></div><div class="r" style="left:195px;top:0;width:195.3px;height:100%;background-color:#fff;background-image:repeating-linear-gradient(145.5deg,#8dbaf6 0px,#8dbaf6 4px,rgba(0,0,0,0) 4px,rgba(0,0,0,0) 11.2px)"></div></div>
<div class="t" style="left:1690.45px;top:968.93px;font-size:16.5px;line-height:16.5px;font-weight:400;color:#222222;letter-spacing:0.500px;">50%</div>
<div class="t" style="left:1512.30px;top:1045.08px;font-size:19.75px;line-height:19.75px;font-weight:400;color:#333333;letter-spacing:-0.157px;">1 steps(s) left</div>
<div class="t" style="left:1744.80px;top:1044.88px;font-size:19.75px;line-height:19.75px;font-weight:700;color:#1b67e2;letter-spacing:-0.636px;">Go to Next step</div>
<div class="r" style="left:846.20px;top:611.00px;width:169.00px;height:149.00px;background:#fff;border-radius:5px;box-shadow:0 4px 14px rgba(0,0,0,0.16),0 0 2px rgba(0,0,0,0.10)"></div>
<div class="r" style="left:847.20px;top:610.50px;width:164.10px;height:55.30px;border:5.2px solid #d64a7b"></div>
<div class="t" style="left:868.30px;top:632.08px;font-size:19.75px;line-height:19.75px;font-weight:400;color:#1a1a1a;letter-spacing:0.300px;">Edit Steps</div>
<div class="t" style="left:868.30px;top:674.68px;font-size:19.75px;line-height:19.75px;font-weight:400;color:#1a1a1a;letter-spacing:0.317px;">Disable</div>
<div class="t" style="left:868.30px;top:717.58px;font-size:19.75px;line-height:19.75px;font-weight:400;color:#d3334b;letter-spacing:0.540px;">Delete</div>
<svg style="left:0;top:0" width="2866" height="1446" viewBox="0 0 2866 1446">
<path d="M782.8 516 C 786 545, 800 570, 833 581" fill="none" stroke="#d64a7b" stroke-width="4.8" stroke-linecap="butt"/>
<path d="M852.6 586.2 L824.6 591.8 L832.2 568.5 Z" fill="#d64a7b"/>
</svg>
</body></html>
